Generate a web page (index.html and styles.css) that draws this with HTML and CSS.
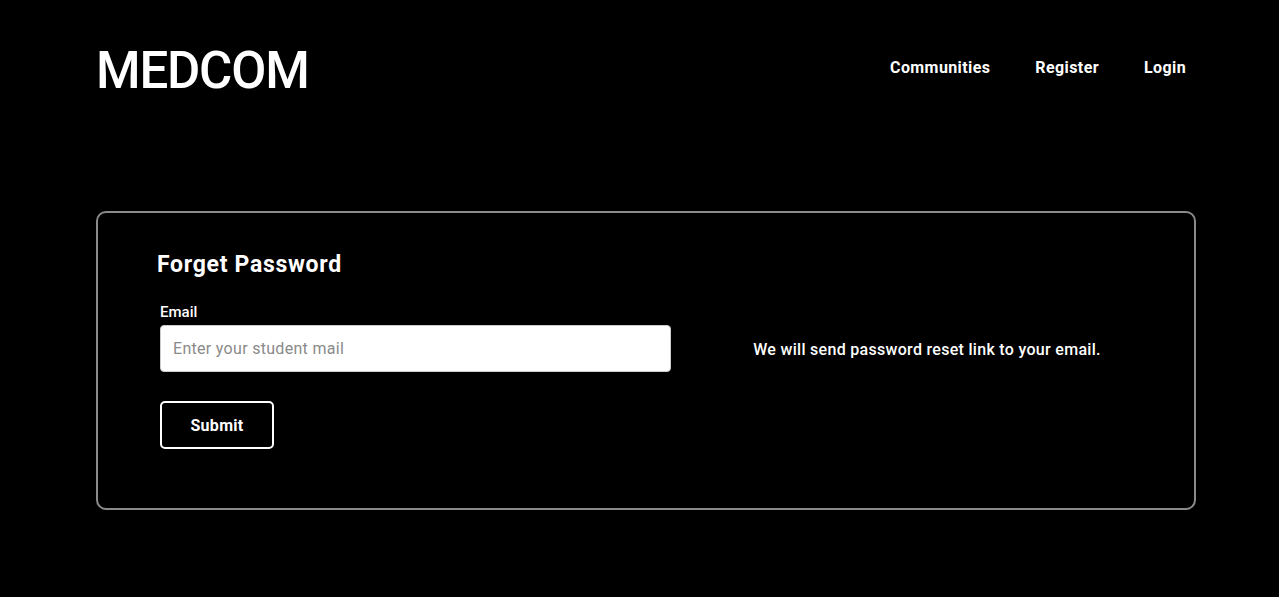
FILE: index.html
```html
<!DOCTYPE html>
<html lang="en">
<head>
<meta charset="utf-8">
<title>MEDCOM - Forget Password</title>
<link rel="stylesheet" href="styles.css">
</head>
<body>
<div class="page">
  <header class="header">
    <a class="logo" href="#">MEDCOM</a>
    <nav class="nav">
      <a href="#">Communities</a>
      <a href="#">Register</a>
      <a href="#">Login</a>
    </nav>
  </header>
  <main class="card">
    <div class="form-col">
      <h1 class="title">Forget Password</h1>
      <label class="label" for="email">Email</label>
      <input class="input" id="email" type="email" placeholder="Enter your student mail">
      <button class="btn" type="button">Submit</button>
    </div>
    <div class="info-col">
      <p class="info">We will send password reset link to your email.</p>
    </div>
  </main>
</div>
</body>
</html>
```
FILE: styles.css
```css
* { box-sizing: border-box; }
html, body { margin: 0; background: #000; color: #fff; }
body { font-family: Roboto, "Liberation Sans", sans-serif; }
.page { width: 1100px; margin-left: 96px; }
.header {
  display: flex;
  align-items: center;
  justify-content: space-between;
  height: 140px;
}
.logo {
  color: #fff;
  text-decoration: none;
  font-size: 51px;
  font-weight: 500;
  letter-spacing: -1.2px;
  line-height: 1;
  margin-top: 0;
}
.nav { display: flex; gap: 45px; padding-right: 10px; margin-top: -6px; }
.nav a { color: #fff; text-decoration: none; font-weight: 700; font-size: 16px; letter-spacing: 0.4px; }
.card {
  margin-top: 71px;
  border: 2px solid #8a8a8a;
  border-radius: 10px;
  height: 299px;
  display: flex;
  padding: 39px 62px 0;
}
.form-col { width: 510px; display: flex; flex-direction: column; align-items: flex-start; }
.title { margin: 0 0 25px; font-size: 23px; font-weight: 700; line-height: 26px; margin-left: -3px; letter-spacing: 0.7px; }
.label { font-size: 15px; font-weight: 500; line-height: 18px; margin-bottom: 4px; }
.input {
  width: 511px;
  height: 47px;
  border: 1px solid #ccc;
  border-radius: 4px;
  background: #fff;
  padding: 0 12px;
  font-family: inherit;
  font-size: 16px;
  letter-spacing: 0.3px;
  color: #333;
}
.input::placeholder { color: #8a8a8a; }
.btn {
  margin-top: 29px;
  width: 114px;
  height: 48px;
  background: #000;
  color: #fff;
  border: 2px solid #fff;
  border-radius: 5px;
  font-family: inherit;
  font-size: 16px;
  font-weight: 700;
  letter-spacing: 0.3px;
}
.info-col { flex: 1; display: flex; justify-content: center; padding-top: 89px; padding-left: 52px; }
.info { margin: 0; font-size: 16px; font-weight: 500; line-height: 18px; letter-spacing: 0.3px; }
```
